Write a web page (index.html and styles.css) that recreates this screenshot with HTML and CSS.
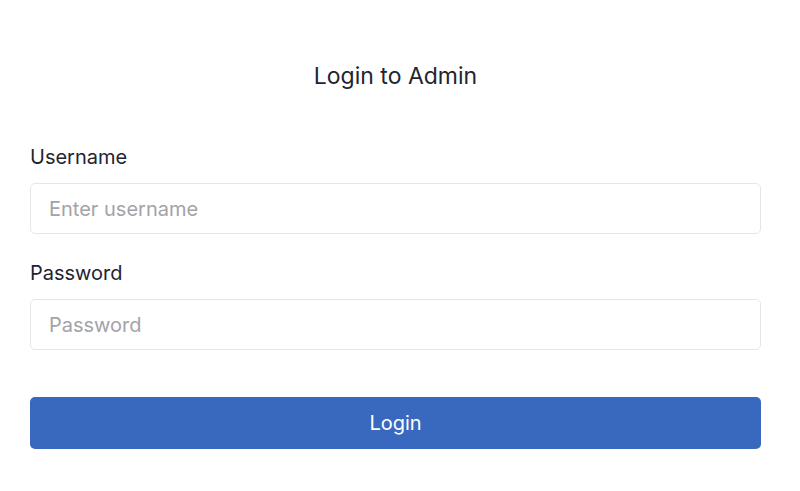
FILE: index.html
```html
<!DOCTYPE html>
<html lang="en">
<head>
    <meta charset="UTF-8">
    <meta name="viewport" content="width=device-width, initial-scale=1.0">
    <title>Login to Admin</title>
    <link rel="stylesheet" href="styles.css">
</head>
<body>
    <div class="login-box">
        <h1>Login to Admin</h1>

        <form class="login-form">
            <div class="form-group">
                <label for="username">Username</label>
                <input type="text" id="username" placeholder="Enter username">
            </div>

            <div class="form-group">
                <label for="password">Password</label>
                <input type="password" id="password" placeholder="Password">
            </div>

            <button type="submit">Login</button>
        </form>
    </div>
</body>
</html>
```

FILE: styles.css
```css
body {
    font-family: Inter, 'Helvetica Neue', Arial, sans-serif;
    margin: 0;
    padding: 0;
    color: #22252f;
    background-color: #fff;
}

.login-box {
    width: 731px;
    margin: 0 0 0 30px;
    padding-top: 62px;
}

h1 {
    margin: 0 0 55px;
    font-size: 23px;
    font-weight: 400;
    line-height: 28px;
    text-align: center;
}

.form-group {
    margin-bottom: 27px;
}

label {
    display: block;
    font-size: 20px;
    line-height: 24px;
    margin-bottom: 14px;
}

input {
    display: block;
    box-sizing: border-box;
    width: 100%;
    height: 51px;
    padding: 0 18px;
    font-family: inherit;
    font-size: 20px;
    color: #22252f;
    border: 1px solid #e6e6e6;
    border-radius: 5px;
    background-color: #fff;
    outline: none;
}

input::placeholder {
    color: #a3a3a8;
}

button {
    display: block;
    width: 100%;
    height: 52px;
    margin-top: 47px;
    font-family: inherit;
    font-size: 20px;
    color: #fff;
    background-color: #3869be;
    border: none;
    border-radius: 5px;
    cursor: pointer;
}
```
